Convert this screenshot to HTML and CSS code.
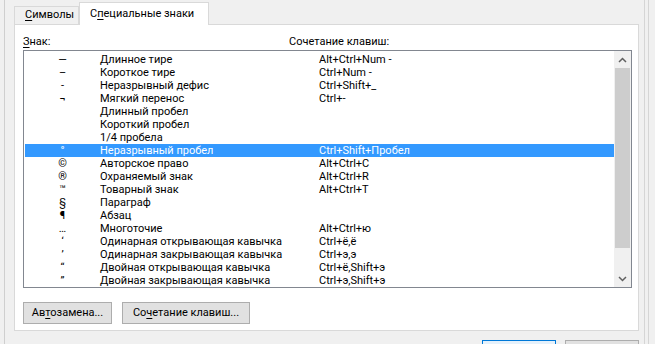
FILE: index.html
```html
<!DOCTYPE html>
<html lang="ru">
<head>
<meta charset="utf-8">
<title>Символ</title>
<link rel="stylesheet" href="styles.css">
</head>
<body>
<div class="screen">
  <div class="edge-left"></div>
  <div class="main">
    <div class="tabs">
      <div class="tab"><u>С</u>имволы</div>
      <div class="tab active">С<u>п</u>ециальные знаки</div>
    </div>
    <div class="panel">
      <div class="heads">
        <span><u>З</u>нак:</span>
        <span>Сочетание клавиш:</span>
      </div>
      <div class="list">
        <div class="rows">
          <div class="row"><span class="sym">—</span><span>Длинное тире</span><span>Alt+Ctrl+Num -</span></div>
          <div class="row"><span class="sym">–</span><span>Короткое тире</span><span>Ctrl+Num -</span></div>
          <div class="row"><span class="sym">-</span><span>Неразрывный дефис</span><span>Ctrl+Shift+_</span></div>
          <div class="row"><span class="sym">¬</span><span>Мягкий перенос</span><span>Ctrl+-</span></div>
          <div class="row"><span class="sym"></span><span>Длинный пробел</span><span></span></div>
          <div class="row"><span class="sym"></span><span>Короткий пробел</span><span></span></div>
          <div class="row"><span class="sym"></span><span>1/4 пробела</span><span></span></div>
          <div class="row selected"><span class="sym">°</span><span>Неразрывный пробел</span><span>Ctrl+Shift+Пробел</span></div>
          <div class="row"><span class="sym">©</span><span>Авторское право</span><span>Alt+Ctrl+C</span></div>
          <div class="row"><span class="sym">®</span><span>Охраняемый знак</span><span>Alt+Ctrl+R</span></div>
          <div class="row"><span class="sym">™</span><span>Товарный знак</span><span>Alt+Ctrl+T</span></div>
          <div class="row"><span class="sym">§</span><span>Параграф</span><span></span></div>
          <div class="row"><span class="sym">¶</span><span>Абзац</span><span></span></div>
          <div class="row"><span class="sym">…</span><span>Многоточие</span><span>Alt+Ctrl+ю</span></div>
          <div class="row"><span class="sym">‘</span><span>Одинарная открывающая кавычка</span><span>Ctrl+ё,ё</span></div>
          <div class="row"><span class="sym">’</span><span>Одинарная закрывающая кавычка</span><span>Ctrl+э,э</span></div>
          <div class="row"><span class="sym">“</span><span>Двойная открывающая кавычка</span><span>Ctrl+ё,Shift+э</span></div>
          <div class="row"><span class="sym">”</span><span>Двойная закрывающая кавычка</span><span>Ctrl+э,Shift+э</span></div>
        </div>
        <div class="scrollbar">
          <div class="arrow"><svg width="9" height="6" viewBox="0 0 9 6"><polyline points="1,5 4.5,1.5 8,5" fill="none" stroke="#606060" stroke-width="1.5"/></svg></div>
          <div class="thumb"></div>
          <div class="track"></div>
          <div class="arrow"><svg width="9" height="6" viewBox="0 0 9 6"><polyline points="1,1 4.5,4.5 8,1" fill="none" stroke="#606060" stroke-width="1.5"/></svg></div>
        </div>
      </div>
      <div class="btns">
        <button class="btn w1">Ав<u>т</u>озамена...</button>
        <button class="btn w2">Со<u>ч</u>етание клавиш...</button>
      </div>
    </div>
    <div class="footer">
      <button class="btn big default" aria-label="Вставить"></button>
      <button class="btn big" aria-label="Отмена"></button>
    </div>
  </div>
  <div class="edge-right"></div>
</div>
</body>
</html>
```
FILE: styles.css
```css
* { box-sizing: border-box; }
html, body { margin: 0; padding: 0; }
body {
  background: #f0f0f0;
  font-family: Roboto, "Noto Sans", sans-serif;
  font-size: 11px;
  color: #000;
}
u { text-decoration: underline; text-underline-offset: 2px; text-decoration-thickness: 1px; }
.screen {
  display: flex;
  width: 655px;
  height: 344px;
  overflow: hidden;
}
.edge-left {
  margin-left: 4px;
  width: 1px;
  background: #cfcfcf;
  flex: none;
}
.main {
  margin-left: 9px;
  width: 625px;
  flex: none;
  padding-top: 2px;
}
.tabs {
  display: flex;
  align-items: flex-end;
  height: 22px;
}
.tab {
  height: 18px;
  width: 65px;
  border: 1px solid #d9d9d9;
  border-bottom: none;
  background: #f0f0f0;
  padding-left: 10px;
  line-height: 16px;
}
.tab.active {
  height: 23px;
  width: 130px;
  margin-bottom: -1px;
  background: #fff;
  position: relative;
  z-index: 1;
  padding-left: 10px;
  line-height: 22px;
}
.panel {
  background: #fff;
  border: 1px solid #d9d9d9;
  height: 307px;
  padding: 8px 6px 0 8px;
}
.heads {
  display: grid;
  grid-template-columns: 266px auto;
  height: 17px;
  line-height: 17px;
}
.list {
  display: flex;
  height: 238px;
  width: 609px;
  border: 1px solid #828790;
}
.rows {
  flex: 1;
  padding-top: 2px;
  padding-left: 1px;
  overflow: hidden;
}
.row {
  display: grid;
  grid-template-columns: 75px 219px auto;
  height: 13px;
  line-height: 13px;
  white-space: nowrap;
}
.row .sym { text-align: center; }
.row.selected { background: #3399ff; color: #fff; }
.scrollbar {
  width: 17px;
  flex: none;
  display: flex;
  flex-direction: column;
  background: #f0f0f0;
}
.arrow {
  height: 17px;
  display: flex;
  align-items: center;
  justify-content: center;
}
.thumb {
  height: 180px;
  margin: 0 1px;
  background: #cdcdcd;
}
.track { flex: 1; }
.btns {
  display: flex;
  gap: 10px;
  margin-top: 14px;
}
.btn {
  font: inherit;
  color: #000;
  height: 22px;
  background: #e1e1e1;
  border: 1px solid #adadad;
  padding: 0;
  line-height: 20px;
}
.w1 { width: 89px; }
.w2 { width: 128px; }
.footer {
  display: flex;
  justify-content: flex-end;
  gap: 9px;
  margin-top: 9px;
}
.big { width: 74px; height: 23px; }
.default { border-color: #0078d7; background: #e5f1fb; }
.edge-right {
  margin-left: 5px;
  width: 5px;
  border-left: 1px solid #d5d5d5;
  border-right: 1px solid #d5d5d5;
  flex: none;
}
```
